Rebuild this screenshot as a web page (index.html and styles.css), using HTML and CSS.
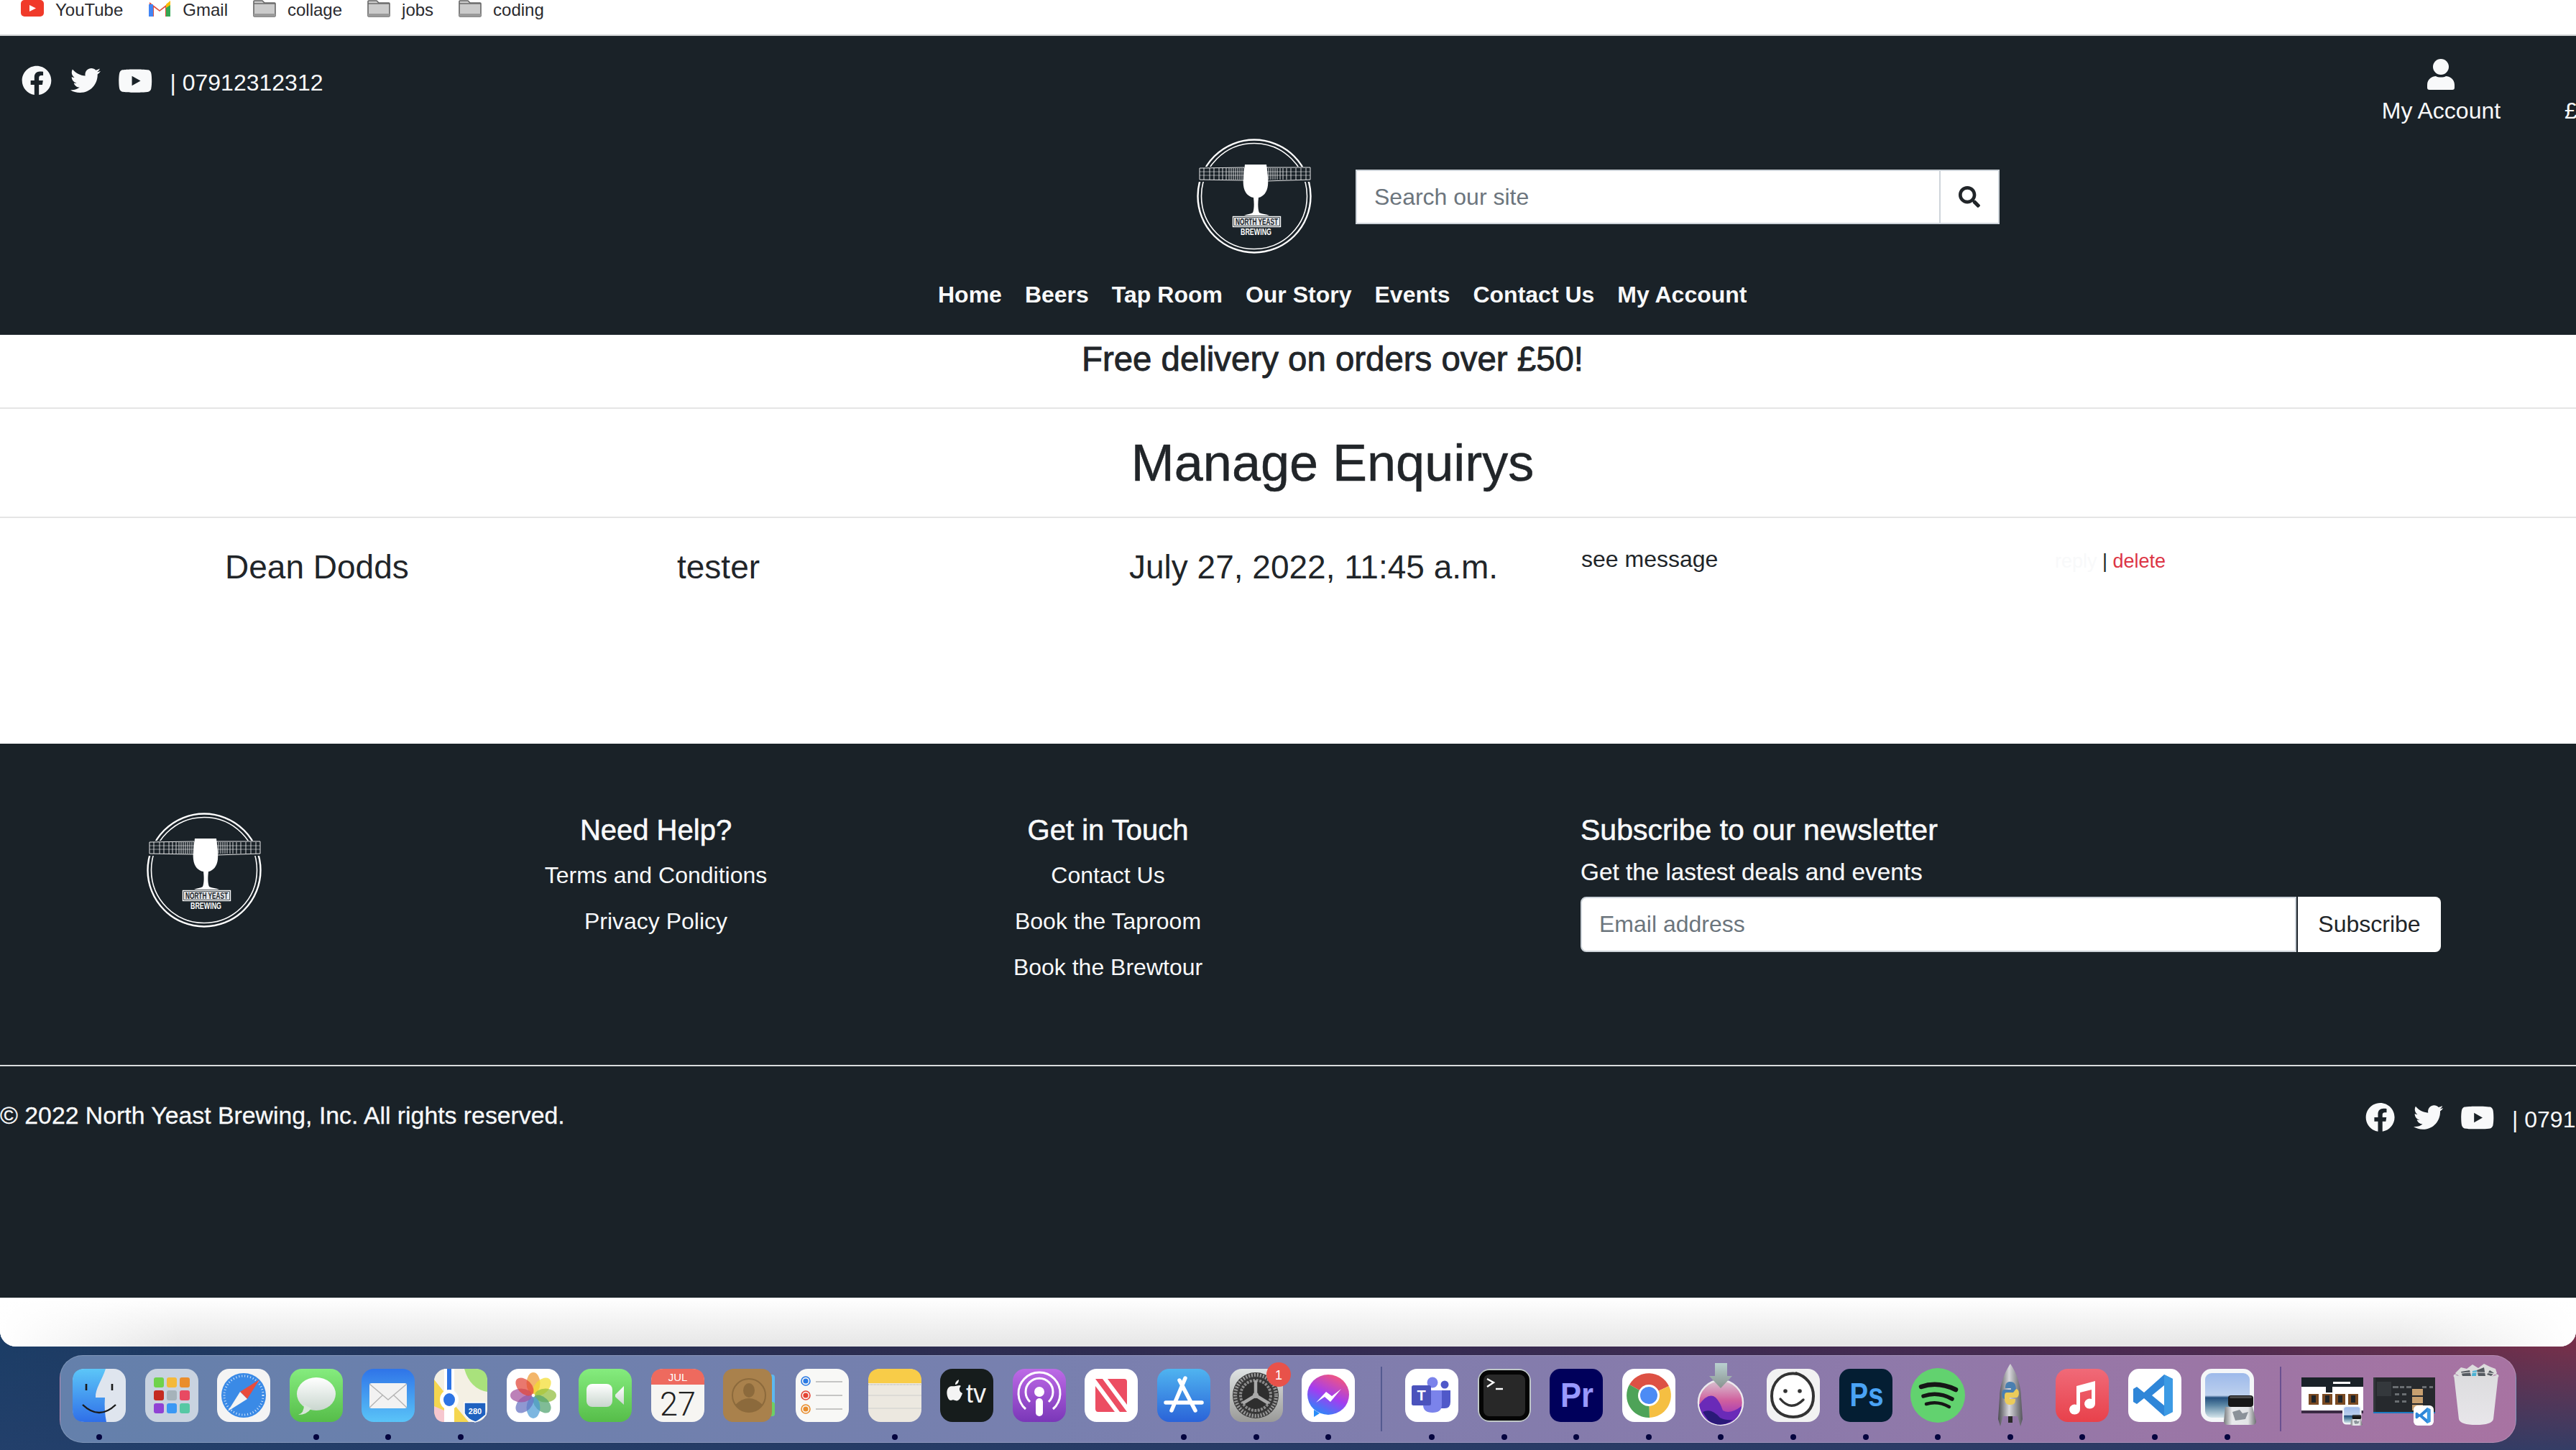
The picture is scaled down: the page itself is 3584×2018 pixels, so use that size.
FILE: index.html
```html
<!DOCTYPE html>
<html lang="en">
<head>
<meta charset="utf-8">
<title>Manage Enquirys</title>
<link rel="stylesheet" href="styles.css">
</head>
<body>
<svg class="defs" width="0" height="0" aria-hidden="true">
  <defs>
    <symbol id="logo" viewBox="0 0 160 160">
      <circle cx="80" cy="80" r="78.5" fill="none" stroke="#fff" stroke-width="2.4"/>
      <circle cx="80" cy="80" r="73.5" fill="none" stroke="#fff" stroke-width="1.6"/>
      <rect x="3" y="39" width="156" height="21" fill="#1a2228"/>
      <path d="M4 41 L66 40 V58 L4 57Z M97 40 L158 40 V57 L97 59Z" fill="none" stroke="#fff" stroke-width=".9"/>
      <path d="M4 46H66M4 51H66M97 46H158M97 51H158" stroke="#fff" stroke-width=".5"/>
      <path d="M10 41V57M18 41V57M24 41V57M31 41V57M36 41V57M41 41V57M45 41V57M48 41V57M51 41V57M54 41V57M57 41V57M60 41V57M63 41V57M100 41V57M103 41V57M106 41V57M109 41V57M112 41V57M116 41V57M120 41V57M125 41V57M131 41V57M138 41V57M145 41V57M152 41V57" stroke="#fff" stroke-width=".8"/>
      <path d="M67 36H97C98 45 100 55 99 65C98 75 92 81 86 82C85 90 85 98 87 103C91 105 97 105 101 107H66C70 105 75 105 78 103C80 98 80 90 79 82C72 81 66 75 65 65C64 55 66 45 67 36Z" fill="#fff"/>
      <rect x="50.5" y="108.5" width="66" height="14" fill="none" stroke="#fff" stroke-width="1.4"/>
      <rect x="52" y="110" width="63" height="11" fill="#e4e6e8"/>
      <text x="83.5" y="119.7" class="logo-a" textLength="59" lengthAdjust="spacingAndGlyphs">NORTH YEAST</text>
      <text x="82.5" y="133.5" class="logo-b" textLength="43" lengthAdjust="spacingAndGlyphs">BREWING</text>
    </symbol>
    <symbol id="fb" viewBox="0 0 512 512"><path d="M504 256C504 119 393 8 256 8S8 119 8 256c0 123.78 90.69 226.38 209.25 245V327.69h-63V256h63v-54.64c0-62.15 37-96.48 93.67-96.48 27.14 0 55.52 4.84 55.52 4.84v61h-31.28c-30.8 0-40.41 19.12-40.41 38.73V256h68.78l-11 71.69h-57.78V501C413.31 482.38 504 379.78 504 256z"/></symbol>
    <symbol id="tw" viewBox="0 0 512 512"><path d="M459.37 151.716c.325 4.548.325 9.097.325 13.645 0 138.72-105.583 298.558-298.558 298.558-59.452 0-114.68-17.219-161.137-47.106 8.447.974 16.568 1.299 25.34 1.299 49.055 0 94.213-16.568 130.274-44.832-46.132-.975-84.792-31.188-98.112-72.772 6.498.974 12.995 1.624 19.818 1.624 9.421 0 18.843-1.3 27.614-3.573-48.081-9.747-84.143-51.98-84.143-102.985v-1.299c13.969 7.797 30.214 12.67 47.431 13.319-28.264-18.843-46.781-51.005-46.781-87.391 0-19.492 5.197-37.36 14.294-52.954 51.655 63.675 129.3 105.258 216.365 109.807-1.624-7.797-2.599-15.918-2.599-24.04 0-57.828 46.782-104.934 104.934-104.934 30.213 0 57.502 12.67 76.67 33.137 23.715-4.548 46.456-13.32 66.599-25.34-7.798 24.366-24.366 44.833-46.132 57.827 21.117-2.273 41.584-8.122 60.426-16.243-14.292 20.791-32.161 39.308-52.628 54.253z"/></symbol>
    <symbol id="yt" viewBox="0 0 576 512"><path d="M549.655 124.083c-6.281-23.65-24.787-42.276-48.284-48.597C458.781 64 288 64 288 64S117.22 64 74.629 75.486c-23.497 6.322-42.003 24.947-48.284 48.597-11.412 42.867-11.412 132.305-11.412 132.305s0 89.438 11.412 132.305c6.281 23.65 24.787 41.5 48.284 47.821C117.22 448 288 448 288 448s170.78 0 213.371-11.486c23.497-6.321 42.003-24.171 48.284-47.821 11.412-42.867 11.412-132.305 11.412-132.305s0-89.438-11.412-132.305zm-317.51 213.508V175.185l142.739 81.205-142.739 81.201z"/></symbol>
    <symbol id="folder" viewBox="0 0 32 24"><path d="M1 2Q1 1 2 1H13L16 4H30Q31 4 31 5V22Q31 23 30 23H2Q1 23 1 22Z" fill="#cbcbcb" stroke="#666" stroke-width="1.6"/><path d="M1 19H31V22Q31 23 30 23H2Q1 23 1 22Z" fill="#999"/><path d="M1 5H31" stroke="#666" stroke-width="1.4"/></symbol>
    <linearGradient id="gSky" x1="0" y1="0" x2="0" y2="1"><stop offset="0" stop-color="#5cc6f8"/><stop offset="1" stop-color="#2f6fe8"/></linearGradient>
    <linearGradient id="gGreen" x1="0" y1="0" x2="0" y2="1"><stop offset="0" stop-color="#85ec7e"/><stop offset="1" stop-color="#56bd49"/></linearGradient>
    <linearGradient id="gMail" x1="0" y1="0" x2="0" y2="1"><stop offset="0" stop-color="#2f74e8"/><stop offset="1" stop-color="#5ac4f8"/></linearGradient>
    <linearGradient id="gWhite" x1="0" y1="0" x2="0" y2="1"><stop offset="0" stop-color="#fff"/><stop offset="1" stop-color="#c9d6ce"/></linearGradient>
    <linearGradient id="gPod" x1="0" y1="0" x2="0" y2="1"><stop offset="0" stop-color="#bd6ae6"/><stop offset="1" stop-color="#7a37b8"/></linearGradient>
    <linearGradient id="gStore" x1="0" y1="0" x2="0" y2="1"><stop offset="0" stop-color="#4fb4f0"/><stop offset="1" stop-color="#2a63d8"/></linearGradient>
    <linearGradient id="gMsg" x1=".2" y1="1" x2=".7" y2="0"><stop offset="0" stop-color="#1f8ffa"/><stop offset=".5" stop-color="#a23df0"/><stop offset="1" stop-color="#f4567c"/></linearGradient>
    <linearGradient id="gMusic" x1="0" y1="0" x2="0" y2="1"><stop offset="0" stop-color="#f06a78"/><stop offset="1" stop-color="#e8414b"/></linearGradient>
    <linearGradient id="gMonterey" x1="0" y1="0" x2="0" y2="1"><stop offset="0" stop-color="#d8c6d2"/><stop offset=".45" stop-color="#d0609e"/><stop offset="1" stop-color="#8a22c8"/></linearGradient>
    <linearGradient id="gArrow" x1="0" y1="0" x2="0" y2="1"><stop offset="0" stop-color="#b9d0d0"/><stop offset="1" stop-color="#88938f"/></linearGradient>
    <linearGradient id="gRocket" x1="0" y1="0" x2="1" y2="0"><stop offset="0" stop-color="#4a4a50"/><stop offset=".45" stop-color="#d8d8dc"/><stop offset="1" stop-color="#55555c"/></linearGradient>
    <linearGradient id="gGear" x1="0" y1="0" x2="0" y2="1"><stop offset="0" stop-color="#dfe3e3"/><stop offset="1" stop-color="#9a9a98"/></linearGradient>
    <linearGradient id="gTrash" x1="0" y1="0" x2="0" y2="1"><stop offset="0" stop-color="#dcdcde"/><stop offset="1" stop-color="#e8e6ea"/></linearGradient>
    <linearGradient id="gSea" x1="0" y1="0" x2="0" y2="1"><stop offset="0" stop-color="#9db9ea"/><stop offset=".5" stop-color="#bcd0ee"/><stop offset=".55" stop-color="#24507e"/><stop offset=".72" stop-color="#5a86a4"/><stop offset="1" stop-color="#d4e4ea"/></linearGradient>
    <linearGradient id="gGlass" x1="0" y1="0" x2="1" y2="0"><stop offset="0" stop-color="#77797c"/><stop offset=".25" stop-color="#e8eaec"/><stop offset=".75" stop-color="#e2e4e6"/><stop offset="1" stop-color="#6d6f72"/></linearGradient>
    <symbol id="previewIco" viewBox="0 0 78 78" overflow="visible">
      <rect width="74" height="74" rx="15" fill="#f4f6f8"/>
      <rect x="6" y="6" width="62" height="62" rx="9" fill="url(#gSea)"/>
      <path d="M34 53H72L77 73Q77 78 72 78H37Q32 78 32 73Z" fill="url(#gGlass)"/>
      <rect x="38" y="37" width="35" height="16" rx="4" fill="#171717"/>
      <rect x="40" y="38" width="31" height="3" rx="1.5" fill="#4a4a4a"/>
      <path d="M44 60L54 57L58 62L66 60L62 70L48 72Z" fill="#8b9299"/>
    </symbol>
    <symbol id="vsIco" viewBox="0 0 74 74">
      <rect width="74" height="74" rx="15" fill="#fff"/>
      <path d="M50 8L62 14V60L50 66L22 41L12 49L7 46V28L12 25L22 33ZM50 23L33 37L50 51Z" fill="#2f86d8"/>
      <path d="M50 8L62 14V60L50 66Z" fill="#3c9ae4"/>
    </symbol>
  </defs>
</svg>

<div class="window">
  <div class="bookmarks">
    <a class="bm"><svg class="bm-ico" viewBox="0 0 32 24"><rect x="0" y="0" width="32" height="23" rx="5" fill="#f03a2a"/><path d="M12 7L21 11.5L12 16Z" fill="#fff"/></svg>YouTube</a>
    <a class="bm"><svg class="bm-ico" viewBox="0 0 32 24"><path d="M2 23V3L16 14L30 3V23H24V10L16 16L8 10V23Z" fill="#e0503f"/><rect x="1" y="6" width="6" height="17" fill="#4285f4"/><rect x="25" y="6" width="6" height="17" fill="#34a853"/><path d="M25 6L31 1V7L25 11Z" fill="#fbbc04"/></svg>Gmail</a>
    <a class="bm"><svg class="bm-ico"><use href="#folder"/></svg>collage</a>
    <a class="bm"><svg class="bm-ico"><use href="#folder"/></svg>jobs</a>
    <a class="bm"><svg class="bm-ico"><use href="#folder"/></svg>coding</a>
  </div>

  <div class="page">
    <header class="site-head">
      <div class="head-top">
        <div class="contact">
          <svg class="i-fb"><use href="#fb"/></svg>
          <svg class="i-tw"><use href="#tw"/></svg>
          <svg class="i-yt"><use href="#yt"/></svg>
          <span class="phone">| 07912312312</span>
        </div>
        <div class="account-wrap">
          <div class="account">
            <svg class="i-user" viewBox="0 0 38 43"><circle cx="19" cy="11" r="11"/><path d="M0 36C0 28 7 24 12 24C15 26 23 26 26 24C31 24 38 28 38 36V40Q38 43 35 43H3Q0 43 0 40Z"/></svg>
            <span>My Account</span>
          </div>
          <span class="basket">£0.00</span>
        </div>
      </div>
      <div class="brand-row">
        <svg class="logo"><use href="#logo"/></svg>
        <form class="search">
          <input class="search-input" type="text" placeholder="Search our site">
          <button class="search-btn" type="button"><svg viewBox="0 0 512 512"><path d="M505 442.7L405.3 343c-4.5-4.5-10.6-7-17-7H372c27.6-35.3 44-79.7 44-128C416 93.1 322.9 0 208 0S0 93.1 0 208s93.1 208 208 208c48.3 0 92.7-16.4 128-44v16.3c0 6.4 2.5 12.5 7 17l99.7 99.7c9.4 9.4 24.6 9.4 33.9 0l28.3-28.3c9.4-9.4 9.4-24.6.1-34zM208 336c-70.7 0-128-57.2-128-128 0-70.7 57.2-128 128-128 70.7 0 128 57.2 128 128 0 70.7-57.2 128-128 128z"/></svg></button>
        </form>
      </div>
      <nav class="nav">
        <a>Home</a><a>Beers</a><a>Tap Room</a><a>Our Story</a><a>Events</a><a>Contact Us</a><a>My Account</a>
      </nav>
    </header>

    <div class="promo"><h4>Free delivery on orders over £50!</h4></div>
    <div class="title"><h1>Manage Enquirys</h1></div>

    <main class="enquiries">
      <div class="cell big">Dean Dodds</div>
      <div class="cell big">tester</div>
      <div class="cell big">July 27, 2022, 11:45 a.m.</div>
      <div class="cell msg">see message</div>
      <div class="cell acts"><span class="reply">reply</span> | <span class="del">delete</span></div>
    </main>

    <footer class="foot">
      <div class="foot-cols">
        <div class="foot-logo"><svg class="logo"><use href="#logo"/></svg></div>
        <div class="foot-col">
          <h5>Need Help?</h5>
          <a>Terms and Conditions</a>
          <a>Privacy Policy</a>
        </div>
        <div class="foot-col">
          <h5>Get in Touch</h5>
          <a>Contact Us</a>
          <a>Book the Taproom</a>
          <a>Book the Brewtour</a>
        </div>
        <div class="news">
          <h5>Subscribe to our newsletter</h5>
          <p>Get the lastest deals and events</p>
          <div class="news-form">
            <input class="news-input" type="text" placeholder="Email address">
            <button class="news-btn" type="button">Subscribe</button>
          </div>
        </div>
      </div>
      <div class="foot-bar">
        <span class="copy">© 2022 North Yeast Brewing, Inc. All rights reserved.</span>
        <div class="contact">
          <svg class="i-fb"><use href="#fb"/></svg>
          <svg class="i-tw"><use href="#tw"/></svg>
          <svg class="i-yt"><use href="#yt"/></svg>
          <span class="phone">| 07912312312</span>
        </div>
      </div>
    </footer>
    <div class="under"></div>
  </div>
</div>

<div class="desktop">
  <div class="dock">
    <div class="slot"><svg viewBox="0 0 74 74"><rect width="74" height="74" rx="17" fill="#dfe5ee"/><path d="M17 0H46C41 16 31 28 32 40H45C44 52 45 64 47 74H17Q0 74 0 57V17Q0 0 17 0Z" fill="url(#gSky)"/><path d="M19 21V30M55 21V30" stroke="#1a1a1a" stroke-width="2.6"/><path d="M14 50Q37 72 60 50" fill="none" stroke="#1a1a1a" stroke-width="2.4"/></svg><i class="dot"></i></div>
    <div class="slot"><svg viewBox="0 0 74 74"><rect width="74" height="74" rx="17" fill="#c9d3e0"/><rect x="12" y="12" width="14" height="14" rx="3" fill="#6fd24c"/><rect x="30" y="12" width="14" height="14" rx="3" fill="#f4b93a"/><rect x="48" y="12" width="14" height="14" rx="3" fill="#ea8d2c"/><rect x="12" y="30" width="14" height="14" rx="3" fill="#c42b20"/><rect x="30" y="30" width="14" height="14" rx="3" fill="#a6b3ba"/><rect x="48" y="30" width="14" height="14" rx="3" fill="#e84a62"/><rect x="12" y="48" width="14" height="14" rx="3" fill="#9042d4"/><rect x="30" y="48" width="14" height="14" rx="3" fill="#3a98f4"/><rect x="48" y="48" width="14" height="14" rx="3" fill="#56c8a4"/></svg><i class="dot off"></i></div>
    <div class="slot"><svg viewBox="0 0 74 74"><rect width="74" height="74" rx="17" fill="#f4f4f4"/><circle cx="37" cy="37" r="31" fill="#3a8ae6"/><circle cx="37" cy="37" r="27" fill="none" stroke="#d4e6fa" stroke-width="3" stroke-dasharray="1 3"/><path d="M59 15L42 42L32 32Z" fill="#e84c3c"/><path d="M15 59L32 32L42 42Z" fill="#f4f4f4"/></svg><i class="dot off"></i></div>
    <div class="slot"><svg viewBox="0 0 74 74"><rect width="74" height="74" rx="17" fill="url(#gGreen)"/><ellipse cx="37" cy="35" rx="27" ry="23" fill="url(#gWhite)"/><path d="M20 50Q20 62 12 64Q24 64 30 55Z" fill="#d8e6da"/></svg><i class="dot"></i></div>
    <div class="slot"><svg viewBox="0 0 74 74"><rect width="74" height="74" rx="17" fill="url(#gMail)"/><rect x="11" y="20" width="52" height="35" rx="3" fill="#f2f2f2"/><path d="M11 21L37 43L63 21M11 54L30 36M63 54L44 36" fill="none" stroke="#b4b4b4" stroke-width="1.4"/></svg><i class="dot"></i></div>
    <div class="slot"><svg viewBox="0 0 74 74"><rect width="74" height="74" rx="17" fill="#f4f0e4"/><path d="M42 0H57Q74 0 74 17V32Q50 28 42 0Z" fill="#a9e27c"/><path d="M0 15L28 50L48 74H17Q0 74 0 57Z" fill="#f5d64f"/><path d="M0 52L14 58V74Q0 74 0 57Z" fill="#f6c7cf"/><path d="M14 0H28V74H14Z" fill="#fff"/><path d="M18 0H24V34H18Z" fill="#2d74e4"/><ellipse cx="21" cy="43" rx="13" ry="14" fill="#fff"/><ellipse cx="21" cy="43" rx="8" ry="9" fill="#2d74e4"/><path d="M42 47H72V64Q60 74 57 74Q46 70 42 62Z" fill="#1f62c0" stroke="#fff" stroke-width="1.5"/><text x="57" y="63" class="a-t shield">280</text></svg><i class="dot"></i></div>
    <div class="slot"><svg viewBox="0 0 74 74"><rect width="74" height="74" rx="17" fill="#fff"/><g fill-opacity=".72"><ellipse cx="37" cy="20" rx="9.5" ry="15" fill="#ef9a32"/><ellipse cx="37" cy="20" rx="9.5" ry="15" fill="#f2dc2e" transform="rotate(45 37 37)"/><ellipse cx="37" cy="20" rx="9.5" ry="15" fill="#90bc3a" transform="rotate(90 37 37)"/><ellipse cx="37" cy="20" rx="9.5" ry="15" fill="#4fa26e" transform="rotate(135 37 37)"/><ellipse cx="37" cy="20" rx="9.5" ry="15" fill="#4a9ad4" transform="rotate(180 37 37)"/><ellipse cx="37" cy="20" rx="9.5" ry="15" fill="#6470c0" transform="rotate(225 37 37)"/><ellipse cx="37" cy="20" rx="9.5" ry="15" fill="#a2509c" transform="rotate(270 37 37)"/><ellipse cx="37" cy="20" rx="9.5" ry="15" fill="#e04436" transform="rotate(315 37 37)"/></g></svg><i class="dot off"></i></div>
    <div class="slot"><svg viewBox="0 0 74 74"><rect width="74" height="74" rx="17" fill="url(#gGreen)"/><rect x="11" y="21" width="36" height="32" rx="8" fill="url(#gWhite)"/><path d="M51 36L63 24V50L51 39Z" fill="url(#gWhite)"/></svg><i class="dot off"></i></div>
    <div class="slot"><svg viewBox="0 0 74 74"><rect width="74" height="74" rx="17" fill="#f6f5f2"/><path d="M0 22V17Q0 0 17 0H57Q74 0 74 17V22Z" fill="#ee6a5e"/><text x="37" y="17" class="a-t jul">JUL</text><text x="37" y="65" class="a-t day" textLength="50" lengthAdjust="spacingAndGlyphs">27</text></svg><i class="dot off"></i></div>
    <div class="slot"><svg viewBox="0 0 74 74"><rect x="60" y="8" width="12" height="58" rx="4" fill="#5cb8f0"/><rect x="60" y="46" width="12" height="20" rx="4" fill="#6ed064"/><rect width="68" height="74" rx="14" fill="#a9814c"/><circle cx="36" cy="37" r="23" fill="none" stroke="#8c6a3c" stroke-width="2"/><ellipse cx="36" cy="30" rx="8" ry="10" fill="#8c6a3c"/><path d="M17 50Q36 32 55 50Q36 70 17 50Z" fill="#8c6a3c"/></svg><i class="dot off"></i></div>
    <div class="slot"><svg viewBox="0 0 74 74"><rect width="74" height="74" rx="17" fill="#f8f8f6"/><g fill="none" stroke-width="1.6"><circle cx="14" cy="17" r="6" stroke="#2a7ae4"/><circle cx="14" cy="37" r="6" stroke="#e44434"/><circle cx="14" cy="56" r="6" stroke="#e88c2c"/></g><circle cx="14" cy="17" r="3.6" fill="#2a7ae4"/><circle cx="14" cy="37" r="3.6" fill="#e44434"/><circle cx="14" cy="56" r="3.6" fill="#e88c2c"/><path d="M28 18H65M28 37H65M28 56H65" stroke="#b4b4b4" stroke-width="1.6"/></svg><i class="dot off"></i></div>
    <div class="slot"><svg viewBox="0 0 74 74"><rect width="74" height="74" rx="17" fill="#ece8e0"/><path d="M0 20V17Q0 0 17 0H57Q74 0 74 17V20Z" fill="#f8cc48"/><path d="M0 37H74M0 55H74" stroke="#d8d6d2" stroke-width="1.5"/><path d="M0 22H74" stroke="#bbb" stroke-width="1.4" stroke-dasharray="1 1"/></svg><i class="dot"></i></div>
    <div class="slot"><svg viewBox="0 0 74 74"><rect width="74" height="74" rx="17" fill="#161c1c"/><path d="M21 24C24 24 27 22 29 24C26 26 26 32 31 34C29 40 26 46 21 44C18 43 18 43 15 44C10 44 7 30 12 26C15 23 18 25 21 24ZM21 22C21 18 24 16 26 15C26 19 24 22 21 22Z" fill="#f4f4f4"/><text x="50" y="47" class="a-t tv">tv</text></svg><i class="dot off"></i></div>
    <div class="slot"><svg viewBox="0 0 74 74"><rect width="74" height="74" rx="17" fill="url(#gPod)"/><g fill="none" stroke="#fff" stroke-width="3"><path d="M18 56A29 29 0 1 1 56 56"/><path d="M24 46A19 19 0 1 1 50 46"/></g><circle cx="37" cy="32" r="7" fill="#fff"/><rect x="32" y="41" width="10" height="25" rx="5" fill="#fff"/></svg><i class="dot off"></i></div>
    <div class="slot"><svg viewBox="0 0 74 74"><rect width="74" height="74" rx="17" fill="#fff"/><path d="M15 14H25L59 60H49ZM15 24L42 60H19Q15 60 15 56ZM32 14H55Q59 14 59 18V50Z" fill="#ec4d62"/></svg><i class="dot off"></i></div>
    <div class="slot"><svg viewBox="0 0 74 74"><rect width="74" height="74" rx="17" fill="url(#gStore)"/><path d="M39 13L20 58M31 16L53 58M12 47H62" stroke="#fff" stroke-width="5.5" stroke-linecap="round"/></svg><i class="dot"></i></div>
    <div class="slot"><svg viewBox="0 0 74 74"><rect width="74" height="74" rx="17" fill="url(#gGear)"/><circle cx="36" cy="37" r="32" fill="#3c3c3c"/><circle cx="36" cy="37" r="28.5" fill="none" stroke="#9a9a9a" stroke-width="5" stroke-dasharray="2 2"/><circle cx="36" cy="37" r="24" fill="#2e2e2e"/><circle cx="36" cy="37" r="21" fill="none" stroke="#8a8a8a" stroke-width="4" stroke-dasharray="3 1.5"/><path d="M36 37V16M36 37L18 48M36 37L54 48" stroke="#a8a8a8" stroke-width="4.5"/><circle cx="36" cy="37" r="4" fill="#a8a8a8"/><circle cx="68" cy="8" r="17" fill="#e8524a"/><text x="68" y="14.5" class="a-t badge">1</text></svg><i class="dot"></i></div>
    <div class="slot"><svg viewBox="0 0 74 74"><rect width="74" height="74" rx="17" fill="#fff"/><path d="M17 57V67L25 62Z" fill="#2a8df8"/><ellipse cx="37" cy="36" rx="29" ry="28" fill="url(#gMsg)"/><path d="M20 47L34 32L42 38L55 28L40 46L32 39Z" fill="#fff"/></svg><i class="dot"></i></div>
    <div class="divider first"></div>
    <div class="slot"><svg viewBox="0 0 74 74"><rect width="74" height="74" rx="17" fill="#fff"/><circle cx="55" cy="22" r="5.5" fill="#5059c9"/><path d="M46 30H63V46Q63 55 55 55H46Z" fill="#5059c9"/><circle cx="38" cy="19" r="7.5" fill="#7b83eb"/><path d="M25 30H51V50Q51 61 38 61Q25 61 25 50Z" fill="#7b83eb"/><rect x="9" y="23" width="27" height="28" rx="2.5" fill="#4b53bc"/><text x="22.5" y="44" class="a-t teams">T</text></svg><i class="dot"></i></div>
    <div class="slot"><svg viewBox="0 0 74 74"><rect width="74" height="74" rx="17" fill="#bfc7c7"/><rect x="2" y="2" width="70" height="70" rx="14" fill="#050505"/><rect x="8" y="8" width="58" height="58" rx="8" fill="#282828"/><path d="M13 14L22 19L13 25" fill="none" stroke="#fff" stroke-width="2.4"/><path d="M25 28H35" stroke="#fff" stroke-width="2.4"/></svg><i class="dot"></i></div>
    <div class="slot"><svg viewBox="0 0 74 74"><rect width="74" height="74" rx="15" fill="#00005b"/><text x="38" y="53" class="a-t pr" textLength="46" lengthAdjust="spacingAndGlyphs">Pr</text></svg><i class="dot"></i></div>
    <div class="slot"><svg viewBox="0 0 74 74"><rect width="74" height="74" rx="17" fill="#fff"/><path d="M37 37L10 22A31 31 0 0 1 65 24Z" fill="#dd5144"/><path d="M37 37L65 24A31 31 0 0 1 38 68Z" fill="#f5bf42"/><path d="M37 37L38 68A31 31 0 0 1 10 22Z" fill="#4ea358"/><circle cx="37" cy="37" r="15" fill="#fff"/><circle cx="37" cy="37" r="12" fill="#4c8bf5"/></svg><i class="dot"></i></div>
    <div class="slot"><svg viewBox="0 0 74 74"><circle cx="37" cy="47" r="31" fill="url(#gMonterey)" stroke="#eceaee" stroke-width="2.4"/><path d="M7 50Q20 32 30 40Q36 46 40 58Q50 64 66 52Q64 68 50 75Q37 80 24 75Q10 68 7 50Z" fill="#6a2ab8"/><path d="M12 60Q24 54 36 68Q44 72 54 71Q37 84 20 72Z" fill="#2a1a78"/><path d="M29 -8H46V10H53L37 27L21 10H29Z" fill="url(#gArrow)"/></svg><i class="dot"></i></div>
    <div class="slot"><svg viewBox="0 0 74 74"><rect width="74" height="74" rx="17" fill="#f2f2f2"/><path d="M42 7C20 4 7 20 7 38C7 56 20 67 37 67C54 67 65 56 65 38C65 22 55 10 40 6" fill="#fff" stroke="#333" stroke-width="4"/><circle cx="26" cy="31" r="2.8" fill="#333"/><circle cx="46" cy="31" r="2.8" fill="#333"/><path d="M19 42Q34 60 51 43" fill="none" stroke="#333" stroke-width="3.4" stroke-linecap="round"/></svg><i class="dot"></i></div>
    <div class="slot"><svg viewBox="0 0 74 74"><rect width="74" height="74" rx="15" fill="#041e33"/><text x="38" y="52" class="a-t ps" textLength="47" lengthAdjust="spacingAndGlyphs">Ps</text></svg><i class="dot"></i></div>
    <div class="slot"><svg viewBox="0 0 76 76" class="spotify"><circle cx="38" cy="38" r="38" fill="#62d26f"/><g fill="none" stroke="#161616" stroke-linecap="round"><path d="M15 26Q38 18 63 30" stroke-width="6.5"/><path d="M18 39Q38 32 58 43" stroke-width="5.5"/><path d="M22 50Q38 45 54 54" stroke-width="4.5"/></g></svg><i class="dot"></i></div>
    <div class="slot"><svg viewBox="0 0 74 74"><path d="M37 -7C46 6 52 24 52 40L54 70L51 80L47 66H27L23 80L20 70L22 40C22 24 28 6 37 -7Z" fill="url(#gRocket)"/><path d="M37 18C31 18 30 22 30 27H38V29H28C24 30 24 42 29 42L33 38H42C45 38 45 34 45 30C45 22 43 18 37 18Z" fill="#4a7fb0"/><path d="M37 50C43 50 44 47 44 42H36V40H46C50 39 50 28 45 28L41 33H32C29 33 29 36 29 40C29 47 31 50 37 50Z" fill="#ebcb5a"/><rect x="34" y="66" width="6" height="9" fill="#2a2a2a"/></svg><i class="dot"></i></div>
    <div class="slot"><svg viewBox="0 0 74 74"><rect width="74" height="74" rx="17" fill="url(#gMusic)"/><path d="M29 24L55 17V48A7.5 7 0 1 1 50 42V29L34 33V56A7.5 7 0 1 1 29 50Z" fill="#fff"/></svg><i class="dot"></i></div>
    <div class="slot"><svg viewBox="0 0 74 74"><use href="#vsIco"/></svg><i class="dot"></i></div>
    <div class="slot"><svg viewBox="0 0 74 74"><use href="#previewIco" width="78" height="78"/></svg><i class="dot"></i></div>
    <div class="divider second"></div>
    <div class="slot wide first-thumb"><svg viewBox="0 0 86 74">
      <rect y="12" width="86" height="50" fill="#fff"/>
      <rect y="12" width="86" height="13" fill="#1a2228"/>
      <rect x="44" y="18" width="24" height="3" fill="#fff"/>
      <rect x="34" y="25" width="9" height="8" fill="#1a2228"/>
      <g fill="#7a4a22"><rect x="10" y="35" width="14" height="15"/><rect x="29" y="35" width="14" height="15"/><rect x="47" y="35" width="14" height="15"/><rect x="65" y="35" width="14" height="15"/></g>
      <g fill="#1f2428"><rect x="14" y="37" width="6" height="10"/><rect x="33" y="37" width="6" height="10"/><rect x="51" y="37" width="6" height="10"/><rect x="69" y="37" width="6" height="10"/></g>
      <rect y="58" width="86" height="4" fill="#3a2a44"/>
      <use href="#previewIco" x="57" y="51" width="28" height="28"/>
    </svg></div>
    <div class="slot wide last-thumb"><svg viewBox="0 0 86 74">
      <rect y="12" width="86" height="50" fill="#26292d"/>
      <rect y="12" width="3" height="50" fill="#33373b"/>
      <rect x="5" y="18" width="20" height="20" fill="#34383c"/>
      <g fill="#6a6e72"><rect x="27" y="24" width="8" height="3"/><rect x="37" y="24" width="6" height="3"/><rect x="46" y="24" width="7" height="3"/><rect x="68" y="24" width="6" height="3"/><rect x="78" y="24" width="5" height="3"/><rect x="30" y="34" width="6" height="3"/><rect x="40" y="34" width="6" height="3"/><rect x="30" y="44" width="6" height="3"/><rect x="40" y="44" width="6" height="3"/></g>
      <g fill="#c8a070"><rect x="54" y="28" width="15" height="9"/><rect x="54" y="39" width="15" height="9"/><rect x="54" y="50" width="15" height="8"/></g>
      <rect y="60" width="86" height="2" fill="#1a7ac0"/>
      <use href="#vsIco" x="56" y="51" width="28" height="28"/>
    </svg></div>
    <div class="slot trash"><svg viewBox="0 0 66 74">
      <path d="M4 6L12 -2L20 0L28 -6L36 -1L44 -7L52 -3L60 0L62 6L50 14H14Z" fill="#dcdcdc"/>
      <path d="M12 4L24 2L26 10L14 10ZM34 2L44 -2L46 10L36 10ZM52 2L58 6L54 10L48 8Z" fill="#555a60"/>
      <path d="M28 3L34 2L33 10L27 10Z" fill="#4ab2d4"/>
      <ellipse cx="33" cy="10" rx="31" ry="5" fill="none" stroke="#ddd" stroke-width="1.2"/>
      <path d="M2 8Q33 18 64 8L57 70Q55 78 33 78Q11 78 9 70Z" fill="url(#gTrash)"/>
    </svg></div>
  </div>
</div>
</body>
</html>
```
FILE: styles.css
```css
* { box-sizing: border-box; }
html, body { margin: 0; padding: 0; }
body {
  width: 3584px;
  height: 2018px;
  overflow: hidden;
  font-family: "Liberation Sans", Arial, sans-serif;
  font-size: 32px;
  color: #212529;
  background:
    linear-gradient(180deg, rgba(36,64,108,0) 1874px, rgba(36,64,108,.8) 2018px),
    linear-gradient(90deg, #1c3d66 0%, #2a2d50 30%, #352a50 55%, #4e2a50 85%, #75304a 100%);
}
.defs { position: absolute; }
.window {
  height: 1874px;
  overflow: hidden;
  background: #fff;
  border-radius: 0 0 22px 22px;
}
.bookmarks {
  height: 50px;
  display: flex;
  align-items: flex-start;
  padding-left: 29px;
  border-bottom: 2px solid #cfd2d3;
  overflow: hidden;
}
.bm {
  display: flex;
  align-items: flex-start;
  font-size: 24px;
  color: #2a2a2e;
  margin-right: 35px;
}
.bm-ico { width: 32px; height: 24px; margin-right: 16px; }
.page { width: 3708px; }
.site-head { height: 416px; background: #1a2228; color: #f8f9fa; }
.head-top { height: 143px; display: flex; justify-content: space-between; align-items: flex-start; }
.contact { display: flex; align-items: center; fill: #f8f9fa; color: #f8f9fa; height: 42px; }
.head-top .contact { margin: 41px 0 0 30px; }
.i-fb { width: 42px; height: 42px; }
.i-tw { width: 42px; height: 42px; margin-left: 26px; }
.i-yt { width: 48.5px; height: 43px; margin-left: 24px; }
.phone { margin-left: 24px; white-space: nowrap; position: relative; top: 3px; }
.account-wrap { display: flex; align-items: flex-end; gap: 89px; padding: 32px 60px 0 0; }
.account { display: flex; flex-direction: column; align-items: center; gap: 11px; width: 165px; }
.i-user { width: 38px; height: 43px; fill: #f8f9fa; }
.account span { white-space: nowrap; }
.basket { white-space: nowrap; }
.brand-row { display: flex; align-items: center; padding-left: 1665px; height: 160px; gap: 61px; }
.logo { width: 160px; height: 160px; }
.logo-a { font: 700 12px "Liberation Sans", sans-serif; text-anchor: middle; fill: #1a2228; }
.logo-b { font: 700 12.5px "Liberation Sans", sans-serif; text-anchor: middle; fill: #fff; }
.search { display: flex; width: 896px; height: 76px; margin-top: 2px; border: 2px solid #ced4da; background: #fff; }
.search-input { flex: 1; border: 0; padding: 0 24px; font: inherit; outline: 0; background: #fff; color: #212529; }
.search-input::placeholder, .news-input::placeholder { color: #6c757d; opacity: 1; }
.search-btn { width: 82px; border: 0; border-left: 2px solid #ced4da; background: #fff; padding: 0; display: flex; align-items: center; justify-content: center; }
.search-btn svg { width: 30px; height: 30px; fill: #212529; }
.nav { display: flex; padding: 39px 0 0 1289px; font-weight: 700; color: #f8f9fa; }
.nav a { padding: 0 16px; white-space: nowrap; }
.promo { height: 103px; border-bottom: 2px solid #e5e5e5; text-align: center; }
.promo h4 { margin: 0; padding-top: 5px; font-size: 47.4px; font-weight: 400; line-height: 58px; -webkit-text-stroke: .9px #212529; }
.title { height: 152px; border-bottom: 2px solid #e5e5e5; text-align: center; }
.title h1 { margin: 0; padding-top: 32px; font-size: 72px; font-weight: 400; line-height: 86px; -webkit-text-stroke: .5px #212529; }
.enquiries { display: grid; grid-template-columns: repeat(5, 629px); padding-left: 282px; height: 314px; align-items: start; }
.cell { padding: 39px 0 0 31px; white-space: nowrap; }
.big { font-size: 46px; line-height: 58px; }
.msg { padding-top: 38px; line-height: 38px; }
.acts { font-size: 27px; padding: 44px 0 0 61px; line-height: 32px; }
.reply { color: #f8f9fa; }
.del { color: #dc3545; }
.foot { height: 771px; background: #1a2228; color: #f8f9fa; }
.foot-cols { display: flex; height: 449px; padding-top: 96px; border-bottom: 2px solid #d9dcdd; }
.foot-logo { width: 598px; padding-left: 204px; }
.foot-col { width: 629px; display: flex; flex-direction: column; align-items: center; }
.foot-col h5, .news h5 { margin: 0 0 20px; font-size: 40px; font-weight: 400; line-height: 48px; -webkit-text-stroke: .6px #f8f9fa; }
.news h5 { font-size: 41px; margin-bottom: 16px; }
.foot-col a { height: 64px; line-height: 38px; }
.news { margin-left: 343px; width: 1197px; }
.news p { margin: 0 0 15px; font-size: 33.3px; line-height: 38px; -webkit-text-stroke: .2px #f8f9fa; }
.news-form { display: flex; height: 77px; }
.news-input { flex: 1; border: 2px solid #ced4da; border-radius: 8px 0 0 8px; padding: 0 24px; font: inherit; background: #fff; }
.news-btn { width: 199px; border: 0; border-radius: 0 8px 8px 0; background: #fff; font: inherit; color: #212529; margin-left: 2px; }
.foot-bar { display: flex; justify-content: space-between; }
.copy { padding-top: 49px; font-size: 33.8px; line-height: 38px; -webkit-text-stroke: .3px #f8f9fa; white-space: nowrap; }
.foot-bar .contact { margin: 50px 0 0 0; width: 417px; }
.under {
  height: 68px;
  width: 3584px;
  background:
    linear-gradient(90deg, #fff 0, rgba(255,255,255,0) 7%, rgba(255,255,255,0) 93%, #fff 100%),
    linear-gradient(180deg, #fff 0, #e6e6e6 100%);
}
.desktop { display: flex; justify-content: center; padding-top: 12px; }
.dock {
  display: flex;
  align-items: flex-start;
  gap: 26.6px;
  height: 122px;
  width: 3418px;
  padding: 18px 17px 0;
  border: 1px solid rgba(255,255,255,.18);
  border-radius: 32px;
  background: linear-gradient(90deg, #6480ab 0%, #7880af 40%, #8a7aab 70%, #a873a2 100%);
}
.slot { width: 74px; flex: none; display: flex; flex-direction: column; align-items: center; }
.slot svg { width: 74px; height: 74px; overflow: visible; display: block; }
.slot svg.spotify { width: 76px; height: 76px; margin: -1px -1px 0; }
.spotify + .dot { margin-top: 16px; }
.dot { width: 8px; height: 8px; margin-top: 17px; border-radius: 50%; background: #05053f; }
.dot.off { visibility: hidden; }
.divider { width: 2px; height: 90px; flex: none; margin-top: -3px; }
.divider.first { background: #545a90; margin-left: 9.4px; margin-right: 5.4px; }
.divider.second { background: #6a5090; margin-left: 9.4px; margin-right: 1.4px; }
.slot.wide { width: 86px; }
.slot.wide svg { width: 86px; }
.slot.first-thumb { margin-right: -12.6px; }
.slot.last-thumb { margin-right: -2.6px; }
.slot.trash { width: 66px; }
.slot.trash svg { width: 66px; }
.a-t { font-family: "Liberation Sans", sans-serif; text-anchor: middle; }
.jul { font-size: 15px; fill: #fff; }
.day { font-family: Roboto, "Liberation Sans", sans-serif; font-weight: 300; font-size: 46px; fill: #222; }
.tv { font-size: 36px; fill: #f4f4f4; }
.badge { font-size: 18px; fill: #fff; }
.shield { font-size: 11px; fill: #fff; font-weight: 700; }
.teams { font-size: 20px; fill: #fff; font-weight: 700; }
.pr { font-size: 48px; fill: #9999ff; font-weight: 700; }
.ps { font-size: 46px; fill: #4aa3f5; font-weight: 700; }
```
